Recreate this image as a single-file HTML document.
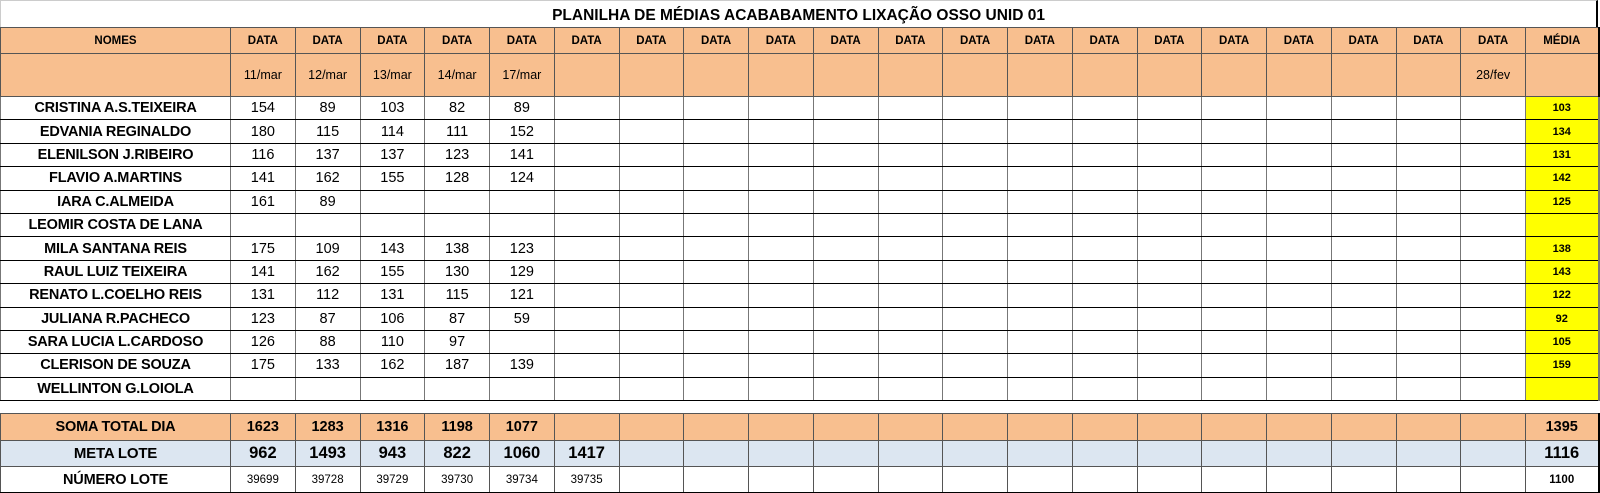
<!DOCTYPE html>
<html><head><meta charset="utf-8"><style>
html,body{margin:0;padding:0;background:#fff;width:1600px;height:493px;overflow:hidden}
body{font-family:"Liberation Sans",sans-serif;position:relative}
.title{position:absolute;left:0;top:0;width:1598px;height:27px;text-align:center;font-weight:bold;font-size:15.5px;line-height:30px;border-top:1px solid #ccc;border-left:1px solid #ccc;border-right:2px solid #000;box-sizing:border-box}
table{position:absolute;left:0;top:27px;border-collapse:collapse;table-layout:fixed;width:1598px}
td{border:1px solid #555;padding:0;text-align:center;font-size:14.5px;white-space:nowrap;overflow:hidden}
tr.h td{background:#f8bf8f;font-weight:bold;font-size:11.5px}
tr.h2 td{background:#f8bf8f;font-size:12.5px;font-weight:normal;vertical-align:middle}
tr.d td{height:22.4px;border-left-color:#777;border-right-color:#777;border-top:1px solid #000;border-bottom:1px solid #000}
td.n{font-weight:bold;font-size:14.5px;letter-spacing:-0.2px}
td.m{background:#ffff00;font-weight:bold;font-size:11px;border-left:1px solid #000}
tr.gap td{height:12px;border-left:none;border-right:none}
tr.s td{background:#f8bf8f;font-weight:bold;font-size:14.5px;height:26px}
tr.mt td{background:#dce6f1;font-weight:bold;font-size:16.5px;height:25px}
tr.mt td.n{font-size:15px}
tr.nl td{font-size:11.5px;height:25px;border-bottom:2px solid #000}
tr.nl td.n{font-size:14.5px}
tr.nl td.last{font-weight:bold}
td.last{border-right:2px solid #000}
</style></head><body>
<div class="title">PLANILHA DE MÉDIAS ACABABAMENTO LIXAÇÃO OSSO UNID 01</div>
<table>
<colgroup><col style="width:230px">
<col style="width:64.75px"><col style="width:64.75px"><col style="width:64.75px"><col style="width:64.75px"><col style="width:64.75px"><col style="width:64.75px"><col style="width:64.75px"><col style="width:64.75px"><col style="width:64.75px"><col style="width:64.75px"><col style="width:64.75px"><col style="width:64.75px"><col style="width:64.75px"><col style="width:64.75px"><col style="width:64.75px"><col style="width:64.75px"><col style="width:64.75px"><col style="width:64.75px"><col style="width:64.75px"><col style="width:64.75px">
<col style="width:73px"></colgroup>
<tr class="h" style="height:26px"><td>NOMES</td><td>DATA</td><td>DATA</td><td>DATA</td><td>DATA</td><td>DATA</td><td>DATA</td><td>DATA</td><td>DATA</td><td>DATA</td><td>DATA</td><td>DATA</td><td>DATA</td><td>DATA</td><td>DATA</td><td>DATA</td><td>DATA</td><td>DATA</td><td>DATA</td><td>DATA</td><td>DATA</td><td class="last">MÉDIA</td></tr>
<tr class="h2" style="height:43px"><td></td><td>11/mar</td><td>12/mar</td><td>13/mar</td><td>14/mar</td><td>17/mar</td><td></td><td></td><td></td><td></td><td></td><td></td><td></td><td></td><td></td><td></td><td></td><td></td><td></td><td></td><td>28/fev</td><td class="last"></td></tr>
<tr class="d"><td class="n">CRISTINA A.S.TEIXEIRA</td><td>154</td><td>89</td><td>103</td><td>82</td><td>89</td><td></td><td></td><td></td><td></td><td></td><td></td><td></td><td></td><td></td><td></td><td></td><td></td><td></td><td></td><td></td><td class="m last">103</td></tr>
<tr class="d"><td class="n">EDVANIA REGINALDO</td><td>180</td><td>115</td><td>114</td><td>111</td><td>152</td><td></td><td></td><td></td><td></td><td></td><td></td><td></td><td></td><td></td><td></td><td></td><td></td><td></td><td></td><td></td><td class="m last">134</td></tr>
<tr class="d"><td class="n">ELENILSON J.RIBEIRO</td><td>116</td><td>137</td><td>137</td><td>123</td><td>141</td><td></td><td></td><td></td><td></td><td></td><td></td><td></td><td></td><td></td><td></td><td></td><td></td><td></td><td></td><td></td><td class="m last">131</td></tr>
<tr class="d"><td class="n">FLAVIO A.MARTINS</td><td>141</td><td>162</td><td>155</td><td>128</td><td>124</td><td></td><td></td><td></td><td></td><td></td><td></td><td></td><td></td><td></td><td></td><td></td><td></td><td></td><td></td><td></td><td class="m last">142</td></tr>
<tr class="d"><td class="n">IARA C.ALMEIDA</td><td>161</td><td>89</td><td></td><td></td><td></td><td></td><td></td><td></td><td></td><td></td><td></td><td></td><td></td><td></td><td></td><td></td><td></td><td></td><td></td><td></td><td class="m last">125</td></tr>
<tr class="d"><td class="n">LEOMIR COSTA DE LANA</td><td></td><td></td><td></td><td></td><td></td><td></td><td></td><td></td><td></td><td></td><td></td><td></td><td></td><td></td><td></td><td></td><td></td><td></td><td></td><td></td><td class="m last"></td></tr>
<tr class="d"><td class="n">MILA SANTANA REIS</td><td>175</td><td>109</td><td>143</td><td>138</td><td>123</td><td></td><td></td><td></td><td></td><td></td><td></td><td></td><td></td><td></td><td></td><td></td><td></td><td></td><td></td><td></td><td class="m last">138</td></tr>
<tr class="d"><td class="n">RAUL LUIZ TEIXEIRA</td><td>141</td><td>162</td><td>155</td><td>130</td><td>129</td><td></td><td></td><td></td><td></td><td></td><td></td><td></td><td></td><td></td><td></td><td></td><td></td><td></td><td></td><td></td><td class="m last">143</td></tr>
<tr class="d"><td class="n">RENATO L.COELHO REIS</td><td>131</td><td>112</td><td>131</td><td>115</td><td>121</td><td></td><td></td><td></td><td></td><td></td><td></td><td></td><td></td><td></td><td></td><td></td><td></td><td></td><td></td><td></td><td class="m last">122</td></tr>
<tr class="d"><td class="n">JULIANA R.PACHECO</td><td>123</td><td>87</td><td>106</td><td>87</td><td>59</td><td></td><td></td><td></td><td></td><td></td><td></td><td></td><td></td><td></td><td></td><td></td><td></td><td></td><td></td><td></td><td class="m last">92</td></tr>
<tr class="d"><td class="n">SARA LUCIA L.CARDOSO</td><td>126</td><td>88</td><td>110</td><td>97</td><td></td><td></td><td></td><td></td><td></td><td></td><td></td><td></td><td></td><td></td><td></td><td></td><td></td><td></td><td></td><td></td><td class="m last">105</td></tr>
<tr class="d"><td class="n">CLERISON DE SOUZA</td><td>175</td><td>133</td><td>162</td><td>187</td><td>139</td><td></td><td></td><td></td><td></td><td></td><td></td><td></td><td></td><td></td><td></td><td></td><td></td><td></td><td></td><td></td><td class="m last">159</td></tr>
<tr class="d"><td class="n">WELLINTON G.LOIOLA</td><td></td><td></td><td></td><td></td><td></td><td></td><td></td><td></td><td></td><td></td><td></td><td></td><td></td><td></td><td></td><td></td><td></td><td></td><td></td><td></td><td class="m last"></td></tr>
<tr class="gap"><td colspan="21"></td><td class="last" style="border-left:none"></td></tr>
<tr class="s"><td class="n">SOMA TOTAL DIA</td><td>1623</td><td>1283</td><td>1316</td><td>1198</td><td>1077</td><td></td><td></td><td></td><td></td><td></td><td></td><td></td><td></td><td></td><td></td><td></td><td></td><td></td><td></td><td></td><td class="last">1395</td></tr>
<tr class="mt"><td class="n">META LOTE</td><td>962</td><td>1493</td><td>943</td><td>822</td><td>1060</td><td>1417</td><td></td><td></td><td></td><td></td><td></td><td></td><td></td><td></td><td></td><td></td><td></td><td></td><td></td><td></td><td class="last">1116</td></tr>
<tr class="nl"><td class="n">NÚMERO LOTE</td><td>39699</td><td>39728</td><td>39729</td><td>39730</td><td>39734</td><td>39735</td><td></td><td></td><td></td><td></td><td></td><td></td><td></td><td></td><td></td><td></td><td></td><td></td><td></td><td></td><td class="last">1100</td></tr>
</table>
</body></html>
